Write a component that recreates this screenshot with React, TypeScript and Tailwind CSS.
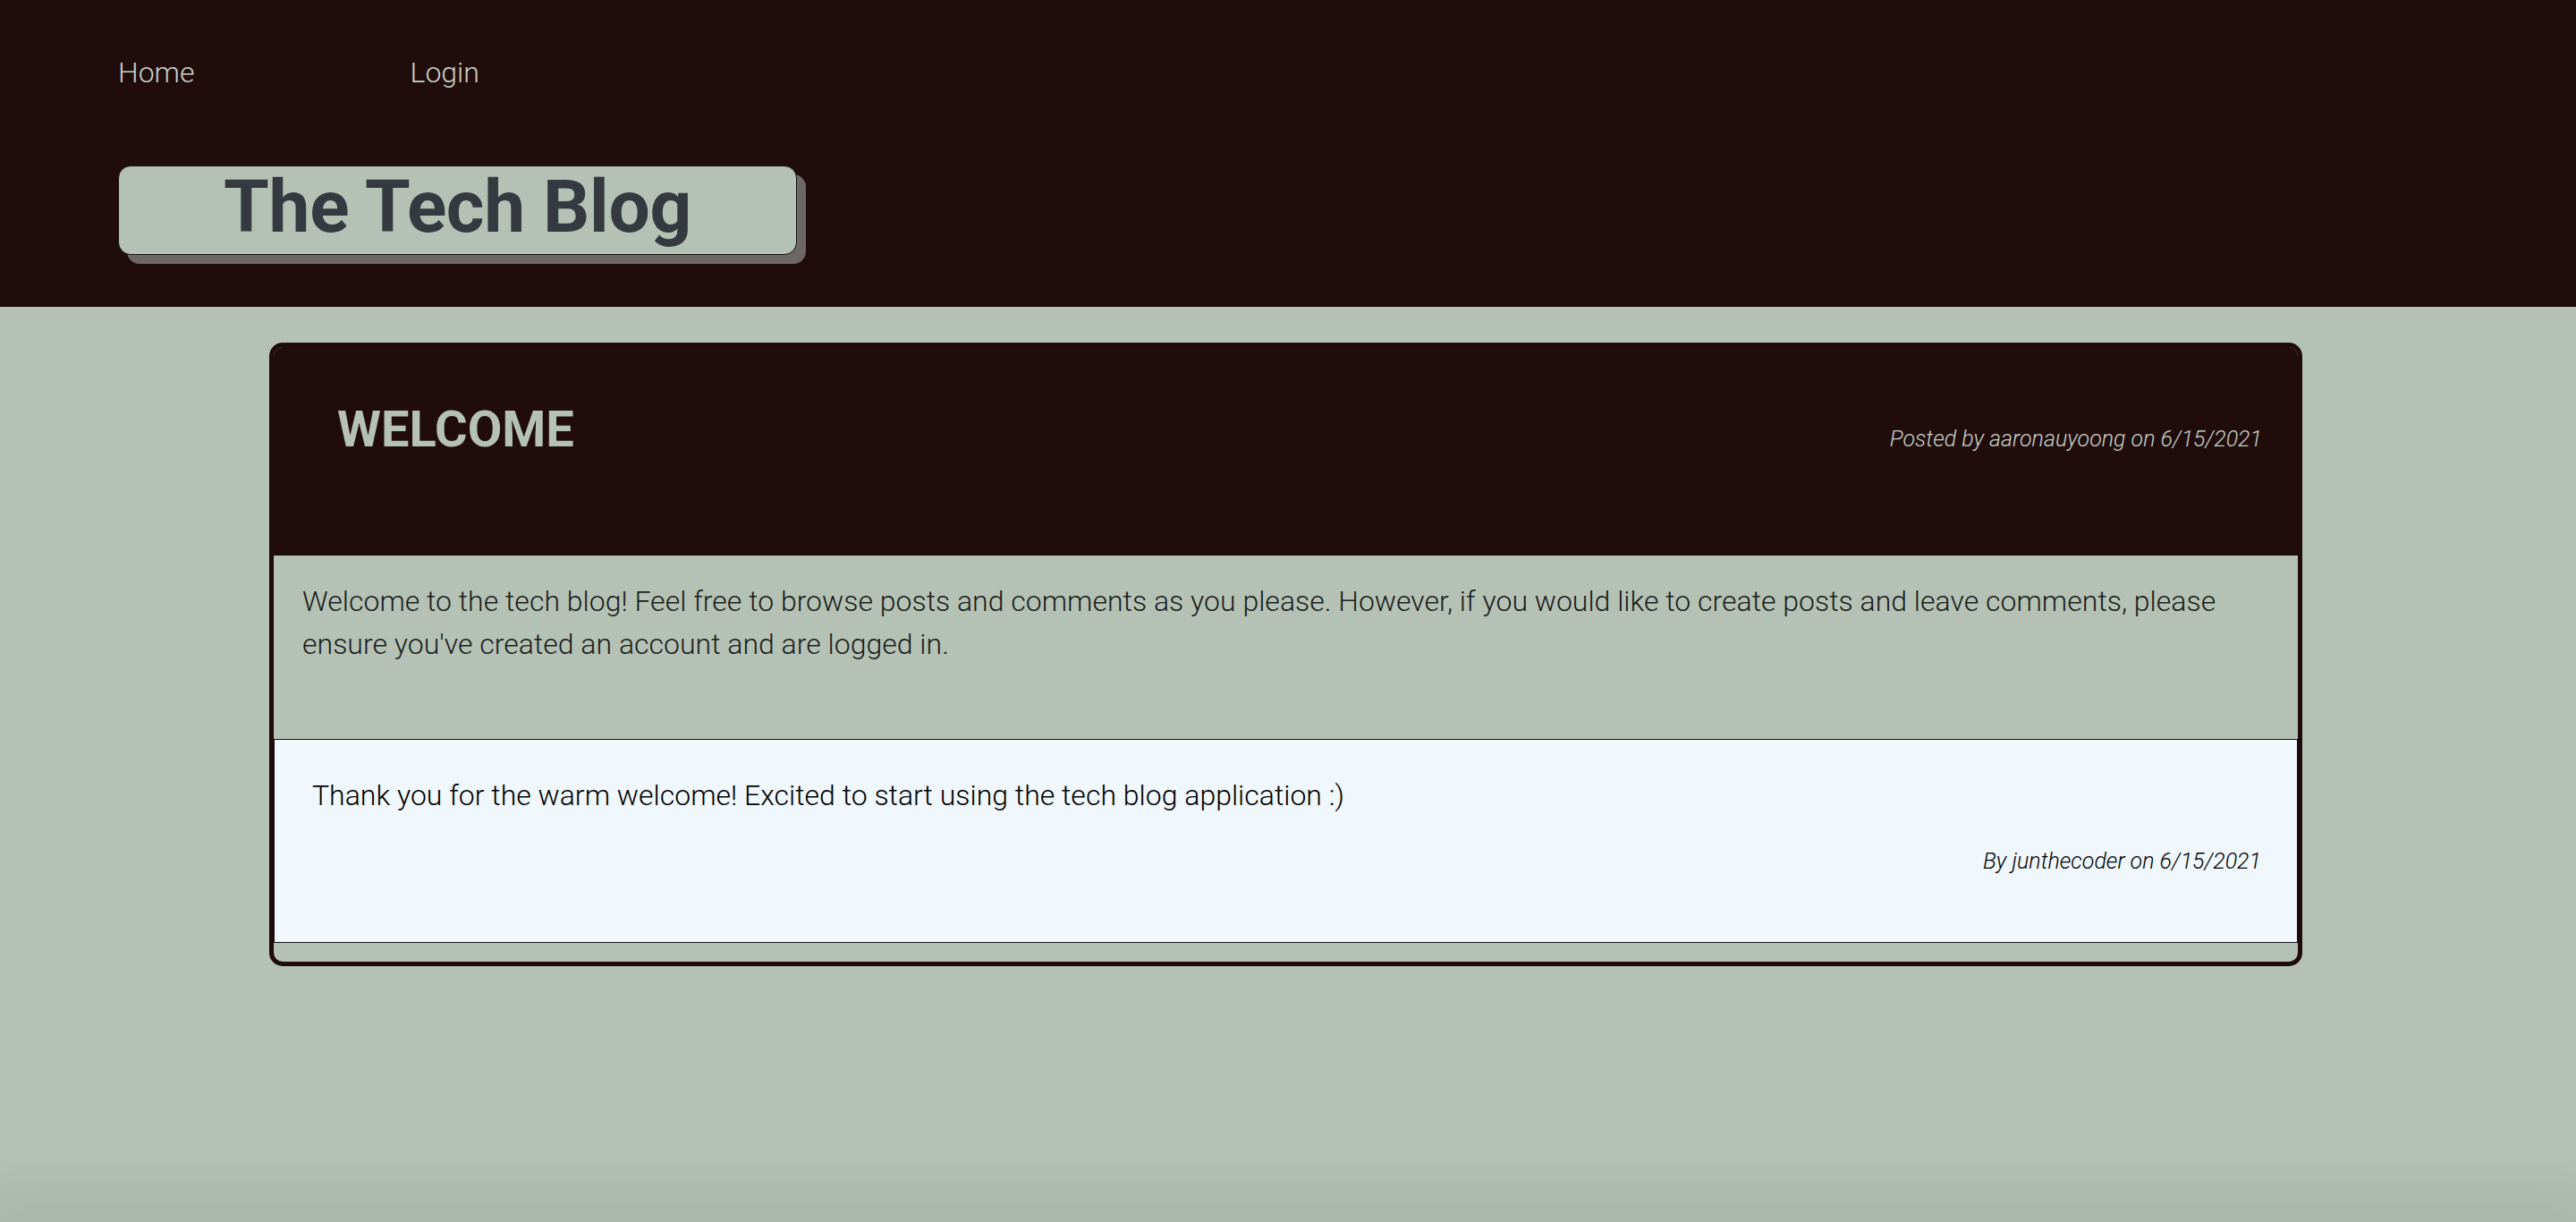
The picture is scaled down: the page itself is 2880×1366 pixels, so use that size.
import React from "react";

const comments = [
  {
    body: "Thank you for the warm welcome! Excited to start using the tech blog application :)",
    author: "junthecoder",
    date: "6/15/2021",
  },
];

export default function App() {
  return (
    <div className="min-h-[1366px] flex flex-col overflow-hidden bg-[#b5c1b4] font-['Roboto',sans-serif]">
      {/* Header */}
      <header className="h-[343px] bg-[#200c0b] px-[132px] pt-[57px]">
        <nav className="flex gap-[241px] text-[32px] leading-[48px] font-light text-[#c9d0c7]">
          <a href="#">Home</a>
          <a href="#">Login</a>
        </nav>
        <div className="mt-[80px] w-[759px] h-[100px] flex items-center justify-center pb-[8px] rounded-[14px] border border-[#111] bg-[#b5c1b4] shadow-[10px_10px_0_#6d6765]">
          <h1 className="text-[82px] leading-none font-bold text-[#343a40] tracking-[-0.3px]">
            The Tech Blog
          </h1>
        </div>
      </header>

      {/* Post */}
      <main className="pt-[40px]">
        <article className="ml-[301px] w-[2273px] rounded-[15px] border-[5px] border-[#1e0b0b] overflow-hidden bg-[#b5c1b4]">
          <div className="h-[233px] bg-[#200c0b] border-b border-[#111] flex items-baseline justify-between pl-[71px] pr-[40px] pt-[59px]">
            <h3 className="text-[56px] leading-[1.2] font-bold text-[#b5c1b4]">WELCOME</h3>
            <p className="text-[25px] leading-[1.5] font-light italic text-[#c9d0c7]">
              Posted by aaronauyoong on 6/15/2021
            </p>
          </div>
          <div className="pl-[32px] pr-[32px] pt-[27px] pb-[82px] border-b border-[#111]">
            <p className="text-[32px] leading-[48px] font-light text-[#1a1d20]">
              Welcome to the tech blog! Feel free to browse posts and comments as you please. However, if you would like to create posts and leave comments, please ensure you've created an account and are logged in.
            </p>
          </div>
          {comments.map((c, i) => (
            <div key={i} className="bg-[#f0f7fd] border-l border-r border-b border-[#111] pl-[42px] pr-[40px] pt-[38px] pb-[71px]">
              <p className="text-[32px] leading-[48px] font-light text-black">{c.body}</p>
              <p className="mt-[31px] text-right text-[25px] leading-[1.5] font-light italic text-black">
                By {c.author} on {c.date}
              </p>
            </div>
          ))}
          <div className="h-[21px]" />
        </article>
      </main>

      {/* Footer shadow */}
      <footer className="mt-auto h-0 shadow-[0_0_70px_25px_rgba(0,0,0,0.1)]" />
    </div>
  );
}
